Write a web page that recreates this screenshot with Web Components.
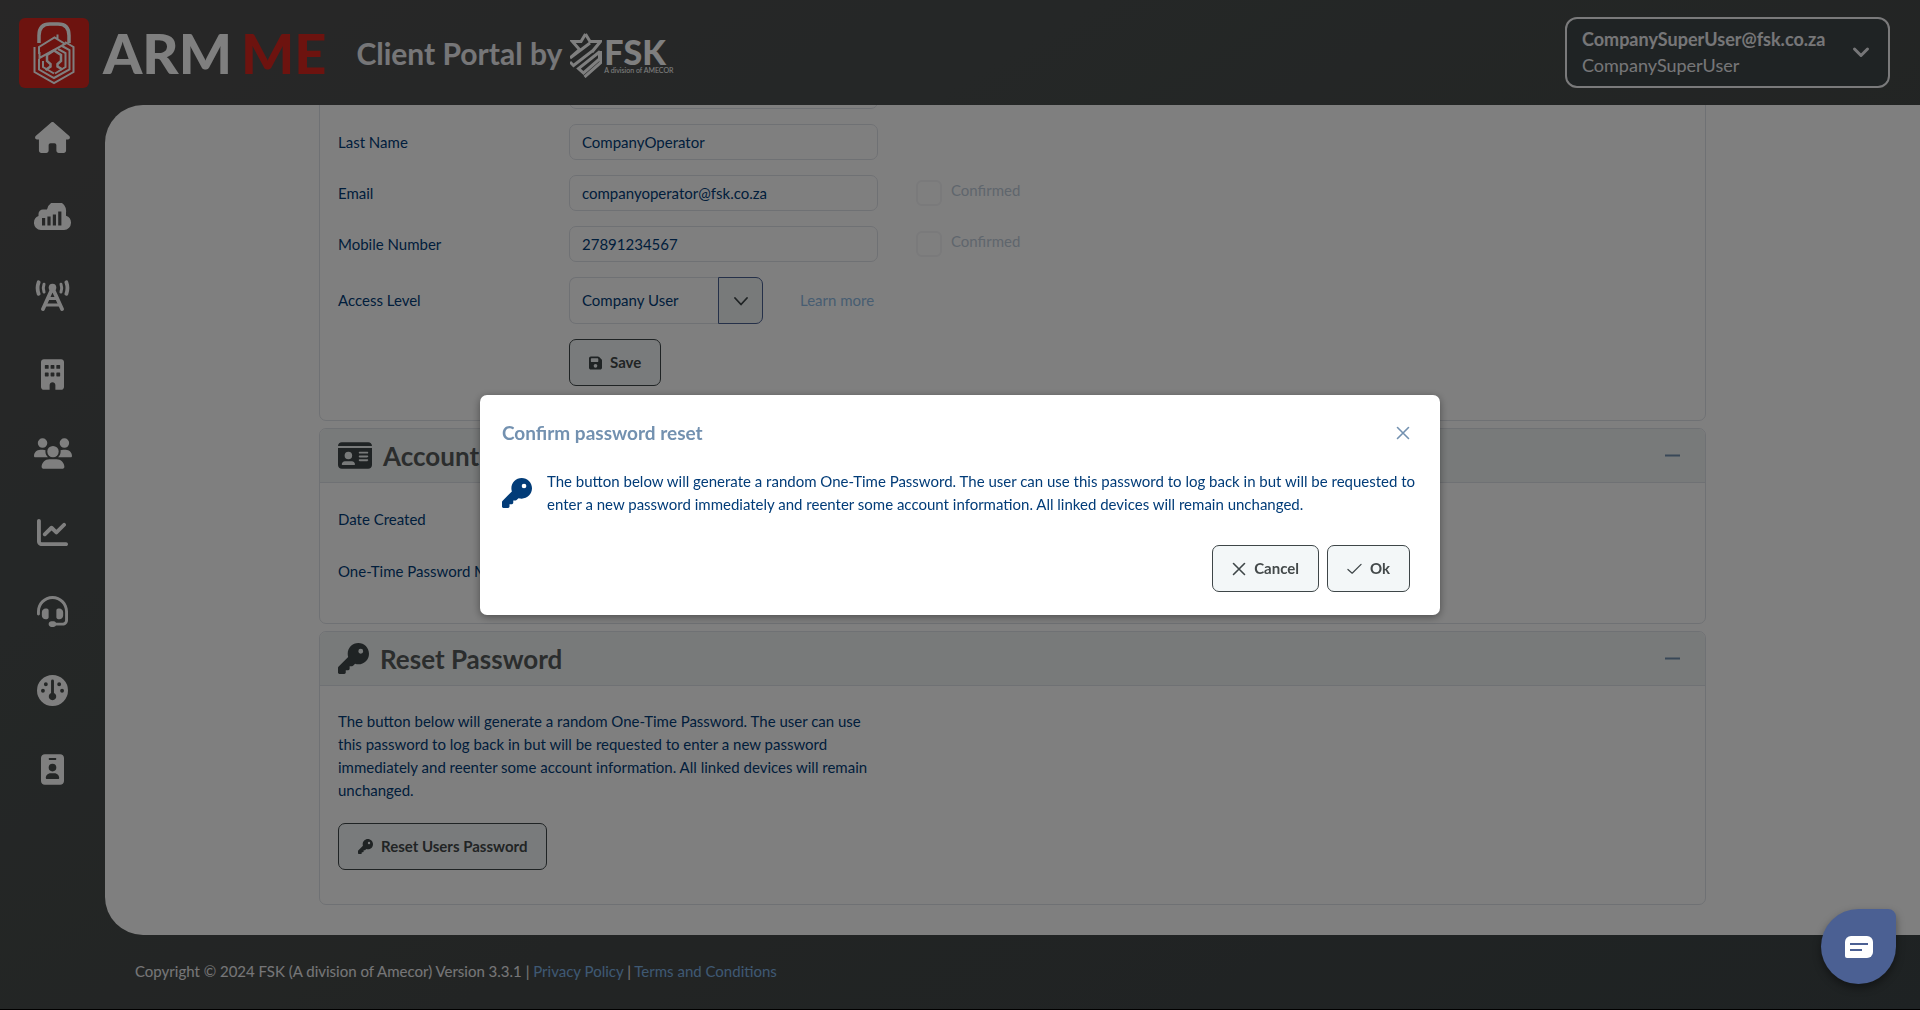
<!DOCTYPE html>
<html lang="en">
<head>
<meta charset="utf-8">
<meta name="viewport" content="width=device-width, initial-scale=1">
<title>Client Portal</title>
<style>
  :root {
    --ink: #023c78;
    --slate: #3e4648;
    --surface: #f1f5f5;
    --line: #dfe2e8;
    --muted: #7391b0;
    --accent: #4b6093;
  }

  html, body {
    height: 100%;
    margin: 0;
  }

  body {
    font: 15px/23px Lato, "Liberation Sans", sans-serif;
    color: var(--ink);
    background: #000;
    overflow: hidden;
  }
</style>
</head>
<body>
<portal-app>
  <app-header slot="header"></app-header>
  <side-nav slot="nav"></side-nav>

  <content-panel>
    <field-row label="First Name" name="first"></field-row>
    <field-row label="Last Name" name="last" value="CompanyOperator"></field-row>
    <field-row label="Email" name="email" value="companyoperator@fsk.co.za" confirm></field-row>
    <field-row label="Mobile Number" name="mobile" value="27891234567" confirm></field-row>
    <access-row></access-row>
    <form-actions><app-button icon="save">Save</app-button></form-actions>
  </content-panel>

  <content-panel icon="card" heading="Account">
    <info-list>
      <span>Date Created</span>
      <span>One-Time Password Mode</span>
    </info-list>
  </content-panel>

  <content-panel icon="key" heading="Reset Password">
    <reset-section>
      The button below will generate a random One-Time Password. The user can use this password to log back in but will be requested to enter a new password immediately and reenter some account information. All linked devices will remain unchanged.
      <app-button slot="action" icon="key">Reset Users Password</app-button>
    </reset-section>
  </content-panel>

  <app-footer slot="footer"></app-footer>
</portal-app>

<confirm-dialog heading="Confirm password reset">
  The button below will generate a random One-Time Password. The user can use this password to log back in but will be requested to enter a new password immediately and reenter some account information. All linked devices will remain unchanged.
</confirm-dialog>
<chat-launcher></chat-launcher>

<script>
const ICONS = {
  home: ["0 0 576 512", `<path d="M575.8 255.5c0 18-15 32.1-32 32.1h-32l.7 160.2c0 2.7-.2 5.4-.5 8.1V472c0 22.1-17.9 40-40 40H392c-22.1 0-40-17.9-40-40v-88c0-17.7-14.3-32-32-32h-64c-17.7 0-32 14.3-32 32v88c0 22.1-17.9 40-40 40h-80c-22.1 0-40-17.9-40-40V287.6H32c-18 0-32-14-32-32.1c0-9 3-17 10-24L266.4 8c7-7 15-8 22-8s15 2 21 7l255.4 224.5c8 7 12 15 11 24z"/>`],
  cloud: ["0 0 37 27", `<path fill-rule="evenodd" d="M7 27a7 7 0 0 1-7-7.500a7 7 0 0 1 4.500-6.500V11a4.500 4.500 0 0 1 4.500-4.500h4A9.500 9.500 0 0 1 32 9.500v3.200A7.200 7.200 0 0 1 37 19.500A7.300 7.300 0 0 1 30 27zM8 15v7.500h3.200V15zM13.400 13.500v9h3.200v-9zM18.800 11.500v11H22v-11zM24.200 8.500v14h3.200v-14z"/>`],
  tower: ["0 0 35 31", `<g fill="none" stroke="currentColor" stroke-linecap="round"><path stroke-width="3.800" d="M3.600 2.300a17 17 0 0 0 0 11.500M31.400 2.300a17 17 0 0 1 0 11.500"/><path stroke-width="3" d="M9 4.200a11 11 0 0 0 0 7.800M26 4.200a11 11 0 0 1 0 7.800"/><path stroke-width="3.800" d="M17.500 8L8 29M17.500 8L27 29"/><path stroke-width="3" stroke-linecap="butt" d="M13.500 18.500h8M11 25h13"/></g><circle cx="17.500" cy="7.600" r="3.800"/>`],
  building: ["0 0 384 512", `<path fill-rule="evenodd" d="M48 0C21.500 0 0 21.500 0 48V464c0 26.500 21.500 48 48 48h96V432c0-26.500 21.500-48 48-48s48 21.500 48 48v80h96c26.500 0 48-21.500 48-48V48c0-26.500-21.500-48-48-48zM64 106q0-10 10-10h44q10 0 10 10v44q0 10-10 10H74q-10 0-10-10zM160 106q0-10 10-10h44q10 0 10 10v44q0 10-10 10h-44q-10 0-10-10zM256 106q0-10 10-10h44q10 0 10 10v44q0 10-10 10h-44q-10 0-10-10zM64 234q0-10 10-10h44q10 0 10 10v44q0 10-10 10H74q-10 0-10-10zM160 234q0-10 10-10h44q10 0 10 10v44q0 10-10 10h-44q-10 0-10-10zM256 234q0-10 10-10h44q10 0 10 10v44q0 10-10 10h-44q-10 0-10-10z"/>`],
  users: ["0 0 640 512", `<path d="M144 0a80 80 0 1 1 0 160A80 80 0 1 1 144 0zM512 0a80 80 0 1 1 0 160A80 80 0 1 1 512 0zM0 298.700C0 239.800 47.800 192 106.700 192h42.700c15.900 0 31 3.500 44.600 9.700c-1.300 7.200-1.900 14.700-1.900 22.300c0 38.200 16.800 72.500 43.300 96H21.300C9.600 320 0 310.400 0 298.700zM405.300 320c26.600-23.500 43.300-57.800 43.300-96c0-7.600-.7-15-1.900-22.300c13.600-6.300 28.700-9.700 44.600-9.700h42.700C592.200 192 640 239.800 640 298.700c0 11.800-9.600 21.300-21.300 21.300H405.300zM224 224a96 96 0 1 1 192 0 96 96 0 1 1-192 0zM128 485.300C128 411.700 187.700 352 261.300 352H378.700C452.300 352 512 411.700 512 485.300c0 14.700-11.900 26.700-26.700 26.700H154.700c-14.700 0-26.700-11.900-26.700-26.700z"/>`],
  chart: ["0 0 512 512", `<path d="M64 64c0-17.700-14.300-32-32-32S0 46.300 0 64V400c0 44.200 35.800 80 80 80H480c17.700 0 32-14.300 32-32s-14.300-32-32-32H80c-8.800 0-16-7.200-16-16V64zm406.600 86.600c12.500-12.500 12.500-32.800 0-45.300s-32.800-12.500-45.300 0L320 210.700l-57.400-57.400c-12.500-12.500-32.800-12.500-45.300 0l-112 112c-12.500 12.500-12.500 32.800 0 45.300s32.800 12.500 45.300 0L240 221.300l57.400 57.400c12.500 12.500 32.800 12.500 45.300 0l128-128z"/>`],
  headset: ["0 0 512 512", `<path d="M256 48C141.100 48 48 141.100 48 256v40c0 13.300-10.700 24-24 24s-24-10.700-24-24V256C0 114.600 114.600 0 256 0S512 114.600 512 256V400.100c0 48.600-39.400 88-88.100 88L313.600 488c-8.300 14.300-23.800 24-41.600 24H240c-26.500 0-48-21.500-48-48s21.500-48 48-48h32c17.800 0 33.300 9.700 41.600 24l110.400 .1c22.100 0 40-17.900 40-40V256c0-114.900-93.100-208-208-208zM144 208h16c17.700 0 32 14.300 32 32V352c0 17.700-14.300 32-32 32H144c-35.300 0-64-28.700-64-64V272c0-35.300 28.700-64 64-64zm224 0c35.300 0 64 28.700 64 64v48c0 35.300-28.700 64-64 64H352c-17.700 0-32-14.300-32-32V240c0-17.700 14.300-32 32-32h16z"/>`],
  gauge: ["0 0 512 512", `<path fill-rule="evenodd" d="M0 256a256 256 0 1 1 512 0A256 256 0 1 1 0 256zM232 98v200a62 62 0 1 0 48 0V98a24 24 0 0 0-48 0zM114 152a32 32 0 1 0 64 0 32 32 0 1 0-64 0zM334 152a32 32 0 1 0 64 0 32 32 0 1 0-64 0zM66 260a32 32 0 1 0 64 0 32 32 0 1 0-64 0zM382 260a32 32 0 1 0 64 0 32 32 0 1 0-64 0z"/>`],
  badge: ["0 0 384 512", `<path fill-rule="evenodd" d="M64 0C28.700 0 0 28.700 0 64V448c0 35.300 28.700 64 64 64H320c35.300 0 64-28.700 64-64V64c0-35.300-28.700-64-64-64H64zm96 320h64c44.200 0 80 35.800 80 80c0 8.800-7.200 16-16 16H96c-8.800 0-16-7.200-16-16c0-44.200 35.800-80 80-80zm-32-96a64 64 0 1 1 128 0 64 64 0 1 1-128 0zM144 64h96c8.800 0 16 7.200 16 16s-7.200 16-16 16H144c-8.800 0-16-7.200-16-16s7.200-16 16-16z"/>`],
  card: ["0 32 576 448", `<path fill-rule="evenodd" d="M0 96l576 0c0-35.300-28.700-64-64-64H64C28.700 32 0 60.700 0 96zm0 32V416c0 35.300 28.700 64 64 64H512c35.300 0 64-28.700 64-64V128H0zM64 405.300c0-29.500 23.900-53.300 53.300-53.300H234.700c29.500 0 53.300 23.900 53.300 53.300c0 5.900-4.800 10.700-10.700 10.700H74.700c-5.900 0-10.700-4.800-10.700-10.700zM176 192a64 64 0 1 1 0 128 64 64 0 1 1 0-128zm176 16c0-8.800 7.200-16 16-16H496c8.800 0 16 7.200 16 16s-7.200 16-16 16H368c-8.800 0-16-7.200-16-16zm0 64c0-8.800 7.200-16 16-16H496c8.800 0 16 7.200 16 16s-7.200 16-16 16H368c-8.800 0-16-7.200-16-16zm0 64c0-8.800 7.200-16 16-16H496c8.800 0 16 7.200 16 16s-7.200 16-16 16H368c-8.800 0-16-7.200-16-16z"/>`],
  key: ["0 0 512 512", `<path fill-rule="evenodd" d="M336 352c97.200 0 176-78.800 176-176S433.200 0 336 0S160 78.800 160 176c0 18.700 2.900 36.800 8.300 53.700L7 391c-4.500 4.500-7 10.600-7 17v80c0 13.300 10.700 24 24 24h80c13.300 0 24-10.700 24-24V448h40c13.300 0 24-10.700 24-24V384h40c6.400 0 12.500-2.500 17-7l33.300-33.300c16.900 5.400 35 8.300 53.700 8.300zM376 96a40 40 0 1 1 0 80 40 40 0 1 1 0-80z"/>`],
  save: ["0 0 448 448", `<path fill-rule="evenodd" d="M64 0C28.700 0 0 28.700 0 64V384c0 35.300 28.700 64 64 64H384c35.300 0 64-28.700 64-64V141c0-17-6.700-33.300-18.700-45.300L352 18.700C340 6.700 323.800 0 306.800 0H64zm0 96c0-17.700 14.300-32 32-32H288c17.700 0 32 14.300 32 32v64c0 17.700-14.300 32-32 32H96c-17.700 0-32-14.300-32-32V96zM224 256a64 64 0 1 1 0 128 64 64 0 1 1 0-128z"/>`],
  close: ["0 0 14 14", `<path fill="none" stroke="currentColor" stroke-width="1.600" stroke-linecap="round" d="M1.500 1.500l11 11M12.500 1.500l-11 11"/>`],
  check: ["0 0 16 14", `<path fill="none" stroke="currentColor" stroke-width="1.300" stroke-linecap="round" stroke-linejoin="round" d="M1 7.500l4.500 4L15 2"/>`],
  minus: ["0 0 15 15", `<path fill="none" stroke="currentColor" stroke-width="2" d="M0 7.500h15"/>`],
  down: ["0 0 14 14", `<path fill="none" stroke="currentColor" stroke-width="1.800" stroke-linecap="round" stroke-linejoin="round" d="M1 4l6 6.500L13 4"/>`],
  caret: ["0 0 18 18", `<path fill="none" stroke="currentColor" stroke-width="3" stroke-linecap="round" stroke-linejoin="round" d="M2.500 6l6.500 6.500L15.500 6"/>`]
};

// Attaches an open shadow root and fills it.
class Base extends HTMLElement {
  constructor() {
    super();
    this.attachShadow({ mode: "open" });
  }

  connectedCallback() {
    this.shadowRoot.innerHTML = this.render();
  }

  attr(name) {
    return this.getAttribute(name) || "";
  }
}

class UiIcon extends Base {
  render() {
    const [box, body] = ICONS[this.attr("name")];
    return `
<style>
  :host { display: inline-flex; flex: none; }
  svg { display: block; width: 100%; height: 100%; fill: currentColor; }
</style>
<svg viewBox="${box}" aria-hidden="true">${body}</svg>`;
  }
}

class PortalApp extends Base {
  render() {
    return `
<style>
  :host {
    display: grid;
    grid-template: 105px minmax(0, 1fr) 74px / 105px minmax(0, 1fr);
    height: calc(100vh - 1px);
    background: linear-gradient(150deg, #504f4f, #4a4f4e 30%, #454948 60%, #3d4547);
  }
  slot[name=header]::slotted(*), slot[name=footer]::slotted(*) { grid-column: 1 / -1; }
  main {
    display: flex;
    flex-direction: column;
    justify-content: flex-end;
    align-items: center;
    gap: 7px;
    padding: 0 24px 30px;
    border-radius: 38px 0 0 38px;
    background: #fff;
    overflow: hidden;
  }
</style>
<slot name="header"></slot>
<slot name="nav"></slot>
<main><slot></slot></main>
<slot name="footer"></slot>`;
  }
}

class AppHeader extends Base {
  render() {
    return `
<style>
  :host { display: flex; align-items: center; padding: 0 30px 0 19px; color: #ededf0; }
  .lock { flex: none; width: 70px; height: 70px; border-radius: 6px; background: #da261e; color: #fff; }
  .brand { display: flex; gap: 9px; margin-left: 14px; font-size: 56px; line-height: 70px; font-weight: 900; color: #fff; }
  .brand b { color: #da261e; font-weight: 900; }
  h1 { margin: 0 0 0 30px; font-size: 30px; line-height: 40px; font-weight: 700; white-space: nowrap; }
  .fsk { display: flex; align-items: center; gap: 2px; margin: 4px 0 0 8px; color: #fff; }
  .fsk svg { width: 32px; height: 46px; }
  .fsk strong { display: block; padding-top: 2px; font-size: 34px; line-height: 28px; font-weight: 900; }
  .fsk small { display: block; font-size: 7px; line-height: 8px; white-space: nowrap; }
  user-menu { margin-left: auto; }
</style>
<svg class="lock" viewBox="0 0 70 70" fill="none" stroke="currentColor" aria-hidden="true">
  <path stroke-width="3.500" d="M20 25V17.500C20 9 25 6 31 6h8c6 0 11 3 11 11.500V25"/>
  <path stroke-width="2" d="M15.500 29v25L35 65l19.500-11V29L46 24M20 41V51.500L35 60l15.500-8.500V32L43 28M24 43v6l11 6.500M36 55.500L46.500 49V35L39 31"/>
  <path stroke-width="2" d="M20 36v-7l15.500-9.500L46 26 20.500 40V34M38.500 21v-4.500"/>
  <path stroke-width="2.500" d="M26.500 52l5-3.500V46L28 43v-6l7-4.500 7 4.500v6L38.500 46v2.500l5 3"/>
</svg>
<span class="brand"><span>ARM</span><b>ME</b></span>
<h1>Client Portal by</h1>
<span class="fsk">
  <svg viewBox="0 0 32 46" fill="none" stroke="currentColor" stroke-width="3" aria-hidden="true">
    <path d="M15.500 2L11 9.500H2.500L9.500 17.500 0 26M15.500 2L20 9.500h10.500L23 18.500 3.500 33.500 0 30M30.500 9.500L22 20M0 26L20 11M30 19.500L8.500 36.500 13.500 41 29.500 27V20M14.500 45L31 30.500V19"/>
  </svg>
  <span><strong>FSK</strong><small>A division of AMECOR</small></span>
</span>
<user-menu></user-menu>`;
  }
}

class UserMenu extends Base {
  render() {
    return `
<style>
  :host { display: block; }
  button {
    display: flex;
    align-items: center;
    justify-content: space-between;
    gap: 24px;
    box-sizing: border-box;
    min-width: 325px;
    padding: 7px 18px 8px 15px;
    border: 2px solid #f4f4f6;
    border-radius: 12px;
    background: var(--slate);
    color: #ededf0;
    font: 18px/26px Lato, sans-serif;
    text-align: left;
  }
  b, span { display: block; }
  ui-icon { width: 18px; height: 18px; }
</style>
<button type="button">
  <span><b>CompanySuperUser@fsk.co.za</b><span>CompanySuperUser</span></span>
  <ui-icon name="caret"></ui-icon>
</button>`;
  }
}

class SideNav extends Base {
  render() {
    const items = [
      ["home", "Home", 35, 31], ["cloud", "Signal", 37, 27], ["tower", "Towers", 35, 31],
      ["building", "Companies", 23, 31], ["users", "Users", 38, 31], ["chart", "Reports", 31, 31],
      ["headset", "Support", 31, 31], ["gauge", "Dashboard", 31, 31], ["badge", "Profile", 23, 31]
    ];
    return `
<style>
  :host { display: block; color: #fff; }
  nav { display: grid; grid-auto-rows: 79px; margin-top: -7px; }
  a { display: grid; place-items: center; color: inherit; }
</style>
<nav>${items.map(([icon, label, w, h]) =>
      `<a href="#${icon}" aria-label="${label}"><ui-icon name="${icon}" style="width:${w}px;height:${h}px"></ui-icon></a>`).join("")}</nav>`;
  }
}

class ContentPanel extends Base {
  render() {
    const heading = this.attr("heading");
    const icon = this.attr("icon");
    return `
<style>
  :host {
    display: block;
    flex: none;
    box-sizing: border-box;
    width: 100%;
    max-width: 1387px;
    border: 1px solid var(--line);
    border-radius: 7px;
    overflow: hidden;
  }
  header {
    display: flex;
    align-items: center;
    height: 53px;
    padding: 0 25px 0 18px;
    border-bottom: 1px solid var(--line);
    background: var(--surface);
    color: var(--slate);
  }
  header > ui-icon { width: 31px; height: 31px; }
  header > ui-icon[name=card] { width: 34px; height: 27px; }
  h2 { margin: 0 auto 0 11px; font-size: 26px; line-height: 36px; font-weight: 700; color: #575b5b; }
  button { display: flex; padding: 0; border: 0; background: none; color: var(--muted); }
  button ui-icon { width: 15px; height: 15px; }
  .body { padding: 15px 18px 34px; }
</style>
${heading ? `<header>
  <ui-icon name="${icon}"></ui-icon>
  <h2>${heading}</h2>
  <button type="button" aria-label="Collapse ${heading}"><ui-icon name="minus"></ui-icon></button>
</header>` : ""}
<div class="body"><slot></slot></div>`;
  }
}

class FieldRow extends Base {
  render() {
    const name = this.attr("name");
    return `
<style>
  :host { display: grid; grid-template-columns: 231px 309px 1fr; align-items: center; margin-bottom: 15px; }
  input[type=text] {
    box-sizing: border-box;
    width: 100%;
    height: 36px;
    padding: 0 12px;
    border: 1px solid var(--line);
    border-radius: 7px;
    background: #fff;
    color: inherit;
    font: inherit;
  }
  .confirm { display: flex; align-items: center; gap: 9px; height: 26px; margin-left: 38px; color: #bfccda; }
  .confirm label { margin-bottom: 6px; }
  input[type=checkbox] {
    appearance: none;
    width: 26px;
    height: 26px;
    margin: 0;
    border: 2px solid #f4f4f6;
    border-radius: 6px;
    background: #fff;
  }
</style>
<label for="${name}">${this.attr("label")}</label>
<input type="text" id="${name}" value="${this.attr("value")}">
${this.hasAttribute("confirm") ? `<span class="confirm">
  <input type="checkbox" id="${name}-ok" disabled><label for="${name}-ok">Confirmed</label>
</span>` : ""}`;
  }
}

class AccessRow extends Base {
  render() {
    return `
<style>
  :host { display: grid; grid-template-columns: 231px auto 1fr; align-items: center; margin-bottom: 15px; }
  .combo { display: flex; }
  select {
    appearance: none;
    box-sizing: border-box;
    width: 149px;
    height: 47px;
    padding: 0 12px;
    border: 1px solid var(--line);
    border-right: 0;
    border-radius: 7px 0 0 7px;
    background: #fff;
    color: inherit;
    font: inherit;
  }
  button {
    display: grid;
    place-items: center;
    width: 45px;
    padding: 0;
    border: 1px solid var(--accent);
    border-radius: 0 7px 7px 0;
    background: var(--surface);
    color: var(--slate);
  }
  ui-icon { width: 14px; height: 14px; }
  a { margin-left: 37px; color: #8fbbe4; text-decoration: none; }
</style>
<label for="access">Access Level</label>
<span class="combo">
  <select id="access"><option>Company User</option></select>
  <button type="button" aria-label="Open list"><ui-icon name="down"></ui-icon></button>
</span>
<a href="#levels">Learn more</a>`;
  }
}

class FormActions extends Base {
  render() {
    return `
<style>:host { display: block; padding-left: 231px; }</style>
<slot></slot>`;
  }
}

class InfoList extends Base {
  render() {
    return `
<style>
  :host { display: grid; gap: 20px; padding: 5px 0 2px; line-height: 32px; }
</style>
<slot></slot>`;
  }
}

class ResetSection extends Base {
  render() {
    return `
<style>
  :host { display: block; }
  p { max-width: 540px; margin: 9px 0 21px; }
</style>
<p><slot></slot></p>
<slot name="action"></slot>`;
  }
}

class AppButton extends Base {
  render() {
    const icon = this.attr("icon");
    return `
<style>
  :host { display: inline-block; vertical-align: top; }
  button {
    display: flex;
    align-items: center;
    gap: 8px;
    height: 47px;
    padding: 0 19px;
    border: 1px solid var(--slate);
    border-radius: 7px;
    background: #f3f7f8;
    color: #43494a;
    font: bold 15px/23px Lato, sans-serif;
    white-space: nowrap;
  }
  ui-icon { width: 14px; height: 14px; color: var(--slate); }
  ui-icon[name=key] { width: 15px; height: 15px; }
  ui-icon[name=save] { width: 13px; }
  ui-icon[name=check] { width: 15px; }
</style>
<button type="button"><ui-icon name="${icon}"></ui-icon><slot></slot></button>`;
  }
}

class ConfirmDialog extends Base {
  render() {
    return `
<style>
  :host {
    position: fixed;
    inset: 0;
    display: grid;
    place-items: center;
    background: rgba(0, 0, 0, .5);
  }
  section {
    box-sizing: border-box;
    width: 50%;
    min-width: 600px;
    padding: 22px 20px 23px 22px;
    border-radius: 7px;
    background: #fff;
    box-shadow: 0 2px 8px rgba(0, 0, 0, .4);
  }
  header { display: flex; justify-content: space-between; align-items: center; padding-right: 10px; color: var(--muted); }
  h2 { margin: 0; font-size: 19px; line-height: 32px; font-weight: 700; }
  .close { display: flex; padding: 0; border: 0; background: none; color: inherit; }
  .close ui-icon { width: 14px; height: 14px; }
  .message { display: flex; align-items: center; gap: 15px; margin: 21px 0 29px; }
  .message ui-icon { width: 30px; height: 30px; }
  p { margin: 0; }
  footer { display: flex; justify-content: flex-end; gap: 8px; padding-right: 10px; }
</style>
<section role="dialog" aria-modal="true" aria-labelledby="title">
  <header>
    <h2 id="title">${this.attr("heading")}</h2>
    <button class="close" type="button" aria-label="Close"><ui-icon name="close"></ui-icon></button>
  </header>
  <div class="message"><ui-icon name="key"></ui-icon><p><slot></slot></p></div>
  <footer>
    <app-button icon="close">Cancel</app-button>
    <app-button icon="check">Ok</app-button>
  </footer>
</section>`;
  }
}

class AppFooter extends Base {
  render() {
    return `
<style>
  :host { display: flex; align-items: center; padding: 0 0 2px 135px; color: #ededf0; }
  a { color: #7fb2e5; text-decoration: none; }
</style>
<span>Copyright © 2024 FSK (A division of Amecor) Version 3.3.1 | <a href="#privacy">Privacy Policy</a> | <a href="#terms">Terms and Conditions</a></span>`;
  }
}

class ChatLauncher extends Base {
  render() {
    return `
<style>
  :host { position: fixed; right: 24px; bottom: 26px; }
  button {
    display: grid;
    place-items: center;
    width: 75px;
    height: 75px;
    padding: 0;
    border: 0;
    border-radius: 38px 8px 38px 38px;
    background: var(--accent);
    box-shadow: 0 4px 8px rgba(0, 0, 0, .4);
  }
  svg { width: 28px; height: 22px; }
</style>
<button type="button" aria-label="Open chat">
  <svg viewBox="0 0 28 22"><path fill="#fff" d="M6 0h16a6 6 0 0 1 6 6v10a6 6 0 0 1-6 6H2a2 2 0 0 1-2-2V6a6 6 0 0 1 6-6z"/><path stroke="#4b6093" stroke-width="2" d="M5 8h18M5 14h12"/></svg>
</button>`;
  }
}

customElements.define("ui-icon", UiIcon);
customElements.define("portal-app", PortalApp);
customElements.define("app-header", AppHeader);
customElements.define("user-menu", UserMenu);
customElements.define("side-nav", SideNav);
customElements.define("content-panel", ContentPanel);
customElements.define("field-row", FieldRow);
customElements.define("access-row", AccessRow);
customElements.define("form-actions", FormActions);
customElements.define("info-list", InfoList);
customElements.define("reset-section", ResetSection);
customElements.define("app-button", AppButton);
customElements.define("confirm-dialog", ConfirmDialog);
customElements.define("app-footer", AppFooter);
customElements.define("chat-launcher", ChatLauncher);
</script>
</body>
</html>
